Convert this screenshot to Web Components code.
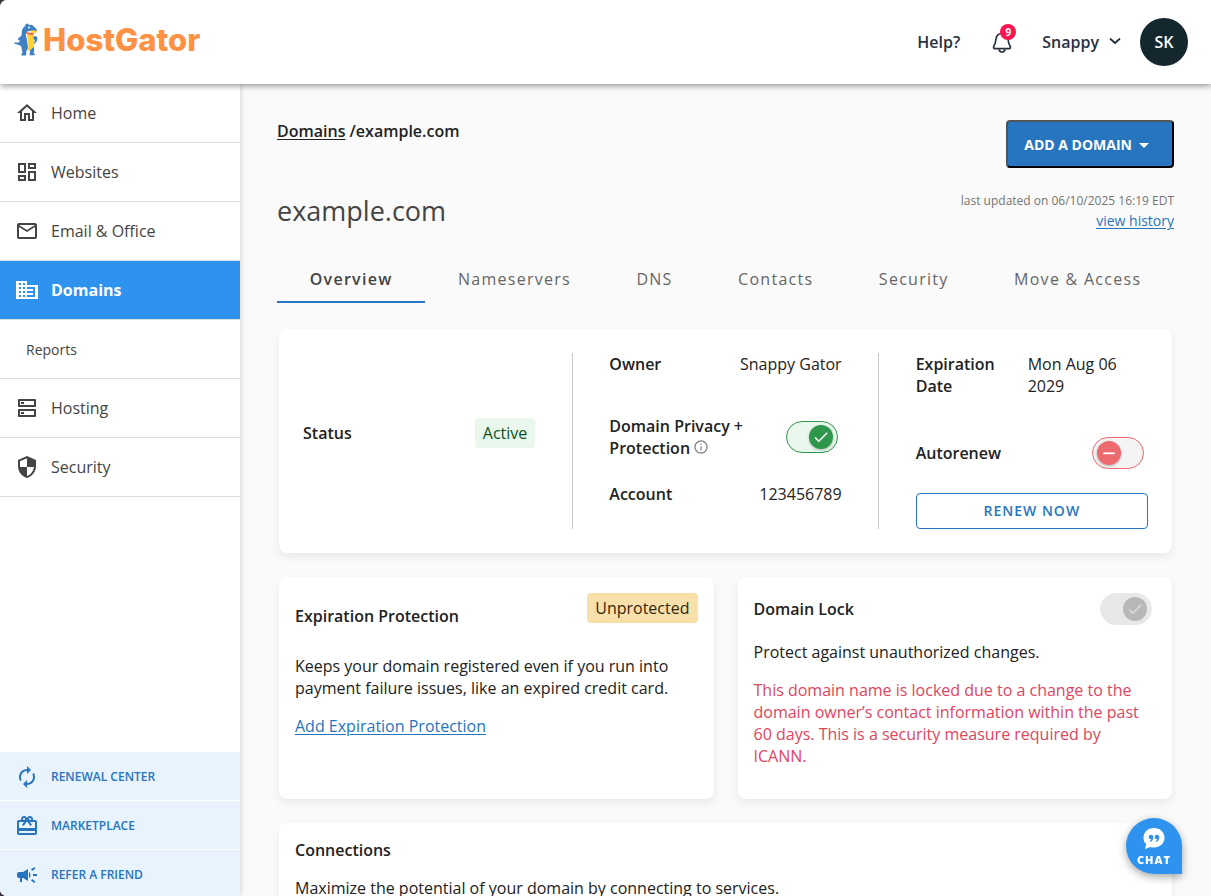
<!DOCTYPE html>
<html lang="en">
<head>
<meta charset="utf-8">
<meta name="viewport" content="width=device-width, initial-scale=1">
<title>Domains / example.com</title>
<style>
  html { height: 100%; background: #35353b; }
  body { margin: 0; height: 100%; overflow: hidden; font: 16px/22px "Open Sans", "Noto Sans", sans-serif; color: #222; }
</style>
</head>
<body>
<hg-app>
  <hg-header slot="header" user="Snappy" initials="SK" alerts="9"></hg-header>
  <hg-sidebar slot="sidebar"></hg-sidebar>
  <hg-domain-page></hg-domain-page>
  <hg-chat slot="chat"></hg-chat>
</hg-app>

<script>
const ICONS = {
  home: 'M12 5.69l5 4.5V18h-2v-6H9v6H7v-7.81l5-4.5M12 3L2 12h3v8h6v-6h2v6h6v-8h3L12 3z',
  dashboard: 'M19 5v2h-4V5h4M9 5v6H5V5h4m10 8v6h-4v-6h4M9 17v2H5v-2h4M21 3h-8v6h8V3zM11 3H3v10h8V3zm10 8h-8v10h8V11zm-10 4H3v6h8v-6z',
  mail: 'M22 6c0-1.1-.9-2-2-2H4c-1.1 0-2 .9-2 2v12c0 1.1.9 2 2 2h16c1.1 0 2-.9 2-2V6zm-2 0l-8 5-8-5h16zm0 12H4V8l8 5 8-5v10z',
  domain: 'M12 7V3H1v18h22V7H12zM6 19H4v-2h2v2zm0-4H4v-2h2v2zm0-4H4V9h2v2zm0-4H4V5h2v2zm4 12H8v-2h2v2zm0-4H8v-2h2v2zm0-4H8V9h2v2zm0-4H8V5h2v2zm10 12h-8v-2h2v-2h-2v-2h2v-2h-2V9h8v10zm-2-8h-4v2h4v-2zm0 4h-4v2h4v-2z',
  hosting: 'M19 15v4H5v-4h14m1-2H4c-.55 0-1 .45-1 1v6c0 .55.45 1 1 1h16c.55 0 1-.45 1-1v-6c0-.55-.45-1-1-1zM6 16h3v2H6zM19 5v4H5V5h14m1-2H4c-.55 0-1 .45-1 1v6c0 .55.45 1 1 1h16c.55 0 1-.45 1-1V4c0-.55-.45-1-1-1zM6 6h3v2H6z',
  shield: 'M12 1L3 5v6c0 5.55 3.84 10.74 9 12 5.16-1.26 9-6.45 9-12V5l-9-4zm0 10.99h7c-.53 4.12-3.28 7.79-7 8.94V12H5V6.3l7-3.11v8.8z',
  renew: 'M12 6v3l4-4-4-4v3c-4.42 0-8 3.58-8 8 0 1.57.46 3.03 1.24 4.26L6.7 14.8c-.45-.83-.7-1.79-.7-2.8 0-3.31 2.69-6 6-6zm6.76 1.74L17.3 9.2c.44.84.7 1.79.7 2.8 0 3.31-2.69 6-6 6v-3l-4 4 4 4v-3c4.42 0 8-3.58 8-8 0-1.57-.46-3.03-1.24-4.26z',
  gift: 'M20 6h-2.18c.11-.31.18-.65.18-1 0-1.66-1.34-3-3-3-1.05 0-1.96.54-2.5 1.35l-.5.67-.5-.68C10.96 2.54 10.05 2 9 2 7.34 2 6 3.34 6 5c0 .35.07.69.18 1H4c-1.11 0-1.99.89-1.99 2L2 19c0 1.11.89 2 2 2h16c1.11 0 2-.89 2-2V8c0-1.11-.89-2-2-2zm-5-2c.55 0 1 .45 1 1s-.45 1-1 1-1-.45-1-1 .45-1 1-1zM9 4c.55 0 1 .45 1 1s-.45 1-1 1-1-.45-1-1 .45-1 1-1zm11 15H4v-2h16v2zm0-5H4V8h5.08L7 10.83 8.62 12 11 8.76l1-1.36 1 1.36L15.38 12 17 10.83 14.92 8H20v6z',
  campaign: 'M18 11v2h4v-2h-4zM16 17.61c.96.71 2.21 1.65 3.2 2.39.4-.53.8-1.07 1.2-1.6-.99-.74-2.24-1.68-3.2-2.4-.4.54-.8 1.08-1.2 1.61zM20.4 5.6c-.4-.53-.8-1.07-1.2-1.6-.99.74-2.24 1.68-3.2 2.4.4.53.8 1.07 1.2 1.6.96-.72 2.21-1.65 3.2-2.4zM4 9c-1.1 0-2 .9-2 2v2c0 1.1.9 2 2 2h1v4h2v-4h1l5 3V6L8 9H4zm11.5 3c0-1.33-.58-2.53-1.5-3.35v6.69c.92-.81 1.5-2.01 1.5-3.34z',
  info: 'M11 7h2v2h-2zm0 4h2v6h-2zm1-9C6.48 2 2 6.48 2 12s4.48 10 10 10 10-4.48 10-10S17.52 2 12 2zm0 18c-4.41 0-8-3.59-8-8s3.59-8 8-8 8 3.59 8 8-3.59 8-8 8z',
  check: 'M9 16.17L4.83 12l-1.42 1.41L9 19 21 7l-1.41-1.41z',
  minus: 'M2 11h20v3H2z'
};

function define(name, render) {
  customElements.define(name, class extends HTMLElement {
    connectedCallback() {
      if (this.shadowRoot) return;
      const template = document.createElement('template');
      template.innerHTML = render(this);
      this.attachShadow({ mode: 'open' }).append(template.content.cloneNode(true));
    }
  });
}

define('hg-icon', el => `
  <style>
    :host { display: inline-block; width: 24px; height: 24px; flex: none; }
    svg { display: block; width: 100%; height: 100%; fill: currentColor; }
  </style>
  <svg viewBox="0 0 24 24" aria-hidden="true"><path d="${ICONS[el.getAttribute('name')]}"/></svg>`);

define('hg-app', () => `
  <style>
    :host { display: grid; grid-template: auto minmax(0, 1fr) / 240px minmax(0, 1fr); height: 100vh;
            background: #fafafa; border-radius: 7px 0 0 7px; overflow: hidden; }
    .header { grid-column: 1 / -1; position: relative; z-index: 2; }
    .side { position: relative; z-index: 1; min-height: 0; }
    main { overflow: hidden auto; scrollbar-width: none; }
    .chat { position: fixed; right: 29px; bottom: 22px; z-index: 3; }
  </style>
  <div class="header"><slot name="header"></slot></div>
  <div class="side"><slot name="sidebar"></slot></div>
  <main><slot></slot></main>
  <div class="chat"><slot name="chat"></slot></div>`);

define('hg-logo', () => `
  <style>
    :host { display: block; }
    a { display: flex; align-items: center; gap: 5px; text-decoration: none; color: #ff9144;
        font: 800 31px/36px Inter, "Open Sans", sans-serif; }
    svg { display: block; width: 24px; height: 34px; }
  </style>
  <a href="#">
    <svg viewBox="0 0 24 34" aria-hidden="true">
      <path fill="#3f7fc4" d="M11 3l1-2 1.800-.6L15 2l3-.2 1.500 1.400L22 5.500l1.200 2-1 1-6-.5-3 .5-1.500 3L13 17l1 8-1.500 3-.5 4.500H7.500l-.3-1.200 1.300-1.300-.7-4L7 23l-3-1.200L0 20.500l1-1.300 3 .6L6 18 3.500 16l4-3.500L8 7l1.500-2.500z"/>
      <path fill="#3f7fc4" d="M15 24l4.500-1 .8 4-.8 3 1.500 1.200-.6 1H15.500l.5-4z"/>
      <path fill="#3f7fc4" d="M19 13.500l2.500-.5 2 1.500-.5 3.500-2.500 3-1-1 1.500-3-2-1z"/>
      <path fill="#ffd23c" d="M13 12l4-.3 3 .6-.8 2.700 1.300 4-.5 4.500L16.500 27l-3 .8L14.500 23l-.7-6z"/>
      <path fill="#ffd23c" d="M16.500 7.300l6.700.5-.8 2-5.400.2z"/>
      <path fill="#f0653a" d="M12 8.500l2 1 4 .5h2l-.5 1.800-4 .2-3-1z"/>
      <circle cx="15" cy="4.500" r="1" fill="#fff"/>
    </svg>
    <span>HostGator</span>
  </a>`);

define('hg-header', el => `
  <style>
    :host { display: flex; align-items: center; justify-content: space-between; padding: 18px 23px 18px 14px;
            background: #fff; box-shadow: 0 2px 6px rgba(0,0,0,.4); color: #27303f; }
    hg-logo { margin-bottom: 4px; }
    nav { display: flex; align-items: center; }
    a { color: inherit; text-decoration: none; font-weight: 600; }
    button { font: inherit; font-weight: 600; color: inherit; background: none; border: 0; padding: 0; cursor: pointer; }
    .bell { position: relative; margin: 0 29px 0 31px; display: block; }
    .bell svg { display: block; width: 22px; height: 24px; }
    .badge { position: absolute; left: 9px; top: -6px; width: 16px; height: 16px; border-radius: 50%;
             background: #ff1450; color: #fff; font: 700 10px/16px "Open Sans", sans-serif; text-align: center; }
    .user { display: flex; align-items: center; gap: 10px; }
    .user svg { width: 12px; height: 12px; display: block; }
    .avatar { margin-left: 19px; width: 48px; height: 48px; border-radius: 50%; background: #14272f; color: #fff;
              font-weight: 600; line-height: 48px; text-align: center; }
  </style>
  <hg-logo></hg-logo>
  <nav aria-label="Account">
    <a href="#">Help?</a>
    <button class="bell" aria-label="Notifications">
      <svg viewBox="0 0 22 24" fill="none" stroke="currentColor" stroke-width="1.700" stroke-linejoin="round">
        <path d="M11 3.500c-3.500 0-5.600 2.300-6 5.500-.3 3-.6 5-2 7-.7 1.200-.6 2.700.8 2.700h14.400c1.400 0 1.500-1.500.8-2.700-1.400-2-1.700-4-2-7-.4-3.200-2.500-5.500-6-5.500z"/>
        <path d="M8 19.500c.4 1.600 1.500 2.500 3 2.500s2.600-.9 3-2.500"/>
      </svg>
      <span class="badge">${el.getAttribute('alerts')}</span>
    </button>
    <button class="user">${el.getAttribute('user')}
      <svg viewBox="0 0 12 12" fill="none" stroke="currentColor" stroke-width="1.800" stroke-linecap="round" stroke-linejoin="round" aria-hidden="true"><path d="M1.500 3L6 7l4.500-4"/></svg>
    </button>
    <div class="avatar">${el.getAttribute('initials')}</div>
  </nav>`);

define('hg-nav-item', el => `
  <style>
    :host { display: block; color: #444; border-bottom: 1px solid #dcdcdc; }
    a { display: flex; align-items: center; gap: 12px; padding: 17px 15px; color: inherit; text-decoration: none; }
    :host([active]) { background: #2e93ee; color: #fff; font-weight: 700; }
    :host([sub]) { font-size: 14px; }
    :host([sub]) a { padding: 19px 26px 17px; }
    :host([promo]) { background: #e8f3fd; color: #2775be; border-color: #fff; font-size: 12px; font-weight: 600; line-height: 24px; }
    :host([promo]) a { padding: 13px 15px 11px; }
    :host([promo]:last-child) { border: 0; }
    :host([promo]:last-child) a { padding-bottom: 9px; }
  </style>
  <a href="#"${el.hasAttribute('active') ? ' aria-current="page"' : ''}>${el.hasAttribute('icon') ? `<hg-icon name="${el.getAttribute('icon')}"></hg-icon>` : ''}<slot></slot></a>`);

define('hg-sidebar', () => `
  <style>
    :host { display: flex; flex-direction: column; justify-content: space-between; height: 100%; background: #fff;
            box-shadow: 0 0 6px rgba(0,0,0,.2); }
  </style>
  <nav aria-label="Main">
    <hg-nav-item icon="home">Home</hg-nav-item>
    <hg-nav-item icon="dashboard">Websites</hg-nav-item>
    <hg-nav-item icon="mail">Email &amp; Office</hg-nav-item>
    <hg-nav-item icon="domain" active>Domains</hg-nav-item>
    <hg-nav-item sub>Reports</hg-nav-item>
    <hg-nav-item icon="hosting">Hosting</hg-nav-item>
    <hg-nav-item icon="shield">Security</hg-nav-item>
  </nav>
  <nav aria-label="Offers">
    <hg-nav-item promo icon="renew">RENEWAL CENTER</hg-nav-item>
    <hg-nav-item promo icon="gift">MARKETPLACE</hg-nav-item>
    <hg-nav-item promo icon="campaign">REFER A FRIEND</hg-nav-item>
  </nav>`);

define('hg-tabs', el => `
  <style>
    :host { display: block; }
    div { display: flex; }
    button { flex: 1 1 auto; font: inherit; letter-spacing: 0.08em; color: #666; background: none; border: 0;
             border-bottom: 2px solid transparent; padding: 13px 0 11px; white-space: nowrap; cursor: pointer; }
    button[aria-selected="true"] { color: #444; font-weight: 600; border-color: #2775be; }
  </style>
  <div role="tablist">${el.getAttribute('items').split('|').map((t, i) =>
    `<button role="tab" aria-selected="${i === 0}">${t.replace('&', '&amp;')}</button>`).join('')}</div>`);

define('hg-card', () => `
  <style>
    :host { display: block; padding: 16px; background: #fff; border-radius: 8px; box-shadow: 0 4px 8px rgba(0,0,0,.07); }
  </style>
  <slot></slot>`);

define('hg-badge', () => `
  <style>
    :host { display: block; padding: 4px 8px; border-radius: 4px; background: #e9f7ec; color: #0c5223; }
    :host([tone="warn"]) { background: #f9e0ab; color: #33270c; }
  </style>
  <slot></slot>`);

define('hg-toggle', el => `
  <style>
    :host { display: block; flex: none; position: relative; width: 52px; height: 32px; margin-right: 4px; }
    input { appearance: none; box-sizing: border-box; display: block; margin: 0; width: 52px; height: 32px; border-radius: 16px;
            border: 1px solid var(--edge); background: var(--track); cursor: pointer; }
    hg-icon { position: absolute; top: 4px; left: 5px; width: 18px; height: 18px; padding: 3px; border-radius: 50%;
              background: var(--knob); color: var(--mark); box-shadow: 0 1px 3px rgba(0,0,0,.25); pointer-events: none; }
    input:checked + hg-icon { left: 23px; }
    input:not(:checked) + hg-icon { width: 14px; height: 14px; padding: 5px; }
    :host { --edge: #ed6a6f; --track: #f4f4f4; --knob: #ed6a6f; --mark: #fff; }
    :host([on]) { --edge: #2f974b; --track: #e9f7ec; --knob: #2f974b; --mark: #fff; }
    :host([disabled]) { --edge: #e8e8e8; --track: #e8e8e8; --knob: #b8b8b8; --mark: #dedede; }
    :host([disabled]) hg-icon { box-shadow: none; }
  </style>
  <input type="checkbox" role="switch" aria-label="${el.getAttribute('label')}"${el.hasAttribute('on') ? ' checked' : ''}${el.hasAttribute('disabled') ? ' disabled' : ''}>
  <hg-icon name="${el.hasAttribute('on') ? 'check' : 'minus'}"></hg-icon>`);

define('hg-row', () => `
  <style>
    :host { display: flex; align-items: center; justify-content: space-between; }
    :host([lead]) { margin-bottom: 16px; }
    .label { font-weight: 600; }
    :host([split]) .label { flex: 0 0 112px; }
    :host([split]) .value { flex: 1; }
  </style>
  <div class="label"><slot name="label"></slot></div>
  <div class="value"><slot></slot></div>`);

define('hg-status-card', () => `
  <style>
    :host { display: block; }
    .grid { display: grid; grid-template-columns: 1fr 2px 1fr 2px 1fr; column-gap: 36px; padding: 8px; }
    .rule { width: 1px; justify-self: center; background: #c8c8c8; }
    .col { display: flex; flex-direction: column; gap: 24px; }
    .mid { justify-content: center; }
    .mid hg-row { margin-top: -16px; }
    hg-icon { width: 16px; height: 16px; color: #888; vertical-align: -1px; margin-left: -1px; }
    button { font: 600 14px/22px "Open Sans", sans-serif; letter-spacing: 1px; color: #2775be; background: #fff;
             border: 1px solid #2775be; border-radius: 4px; padding: 6px; cursor: pointer; }
  </style>
  <hg-card>
    <div class="grid">
      <div class="col mid">
        <hg-row><span slot="label">Status</span><hg-badge>Active</hg-badge></hg-row>
      </div>
      <div class="rule"></div>
      <div class="col">
        <hg-row lead><span slot="label">Owner</span>Snappy Gator</hg-row>
        <hg-row><span slot="label">Domain Privacy + Protection <hg-icon name="info"></hg-icon></span><hg-toggle on label="Domain Privacy + Protection"></hg-toggle></hg-row>
        <hg-row><span slot="label">Account</span>123456789</hg-row>
      </div>
      <div class="rule"></div>
      <div class="col">
        <hg-row lead split><span slot="label">Expiration Date</span>Mon Aug 06 2029</hg-row>
        <hg-row><span slot="label">Autorenew</span><hg-toggle label="Autorenew"></hg-toggle></hg-row>
        <button>RENEW NOW</button>
      </div>
    </div>
  </hg-card>`);

define('hg-domain-page', () => `
  <style>
    :host { display: block; padding: 36px 37px 24px; }
    a { color: #2775be; text-underline-offset: 2px; }
    h1, h2, p { margin: 0; }
    h1 { font-size: 27px; line-height: 40px; font-weight: 400; color: #444; }
    h2 { font-size: 16px; line-height: 22px; font-weight: 600; }
    .top { display: flex; justify-content: space-between; align-items: flex-start; }
    .crumbs { font-weight: 600; white-space: pre; }
    .crumbs a { color: inherit; }
    .add { display: flex; align-items: center; gap: 7px; padding: 12px 23px 10px 16px; border: 2px outset #000; border-radius: 4px;
           background: #2775be; color: #fff; font: 700 14px/22px "Open Sans", sans-serif; cursor: pointer; }
    .add::after { content: ""; border: 5px solid transparent; border-top-color: #fff; border-bottom: 0; }
    .title { margin-top: 23px; }
    .meta { text-align: right; font-size: 12px; color: #757575; line-height: 20px; }
    .meta a { font-size: 14px; }
    hg-tabs { margin-top: 23px; }
    .cards { display: grid; grid-template-columns: 1fr 1fr; gap: 24px; margin: 26px 2px 0; }
    .wide { grid-column: 1 / -1; }
    .head { display: flex; justify-content: space-between; align-items: center; }
    .offset { align-items: flex-start; margin-bottom: 28px; }
    .offset h2 { margin-top: 12px; }
    p { margin-top: 16px; }
    .warn { color: #e0455e; margin-bottom: 16px; }
  </style>
  <div class="top">
    <nav class="crumbs" aria-label="Breadcrumb"><a href="#">Domains</a> /example.com</nav>
    <button class="add">ADD A DOMAIN</button>
  </div>
  <div class="top title">
    <h1>example.com</h1>
    <div class="meta">last updated on 06/10/2025 16:19 EDT<br><a href="#">view history</a></div>
  </div>
  <hg-tabs items="Overview|Nameservers|DNS|Contacts|Security|Move &amp; Access"></hg-tabs>
  <div class="cards">
    <hg-status-card class="wide"></hg-status-card>
    <hg-card>
      <div class="head offset"><h2>Expiration Protection</h2><hg-badge tone="warn">Unprotected</hg-badge></div>
      <div>Keeps your domain registered even if you run into payment failure issues, like an expired credit card.</div>
      <p><a href="#">Add Expiration Protection</a></p>
    </hg-card>
    <hg-card>
      <div class="head"><h2>Domain Lock</h2><hg-toggle on disabled label="Domain Lock"></hg-toggle></div>
      <p>Protect against unauthorized changes.</p>
      <p class="warn">This domain name is locked due to a change to the domain owner’s contact information within the past 60 days. This is a security measure required by ICANN.</p>
    </hg-card>
    <hg-card class="wide">
      <h2>Connections</h2>
      <p>Maximize the potential of your domain by connecting to services.</p>
    </hg-card>
  </div>`);

define('hg-chat', () => `
  <style>
    :host { display: block; }
    button { display: flex; flex-direction: column; align-items: center; width: 56px; height: 56px; padding: 9px 0 0; border: 0;
             border-radius: 50% 50% 0 50%; background: #2e93ee; color: #fff; box-shadow: 0 3px 8px rgba(0,0,0,.35);
             font: 800 11px/18px "Open Sans", sans-serif; letter-spacing: 1px; cursor: pointer; }
    svg { display: block; width: 22px; height: 24px; }
  </style>
  <button>
    <svg viewBox="0 0 22 24" aria-hidden="true">
      <path fill="#fff" d="M11 1c6 0 10.500 4.200 10.500 9.800S17 20.500 11 20.500c-1.500 0-2.600-.2-3.800-.6L2 22l1.200-4.700C1.300 15.500.5 13.200.5 10.800.5 5.200 5 1 11 1z"/>
      <g fill="#2e93ee"><circle cx="8" cy="10" r="2.300"/><path d="M10.300 10c0 2.500-.8 4-3 5l-.6-.9c1.200-.7 1.600-1.500 1.600-2.600z"/>
      <circle cx="14" cy="10" r="2.300"/><path d="M16.300 10c0 2.500-.8 4-3 5l-.6-.9c1.200-.7 1.600-1.500 1.600-2.600z"/></g>
    </svg>
    <span>CHAT</span>
  </button>`);
</script>
</body>
</html>
